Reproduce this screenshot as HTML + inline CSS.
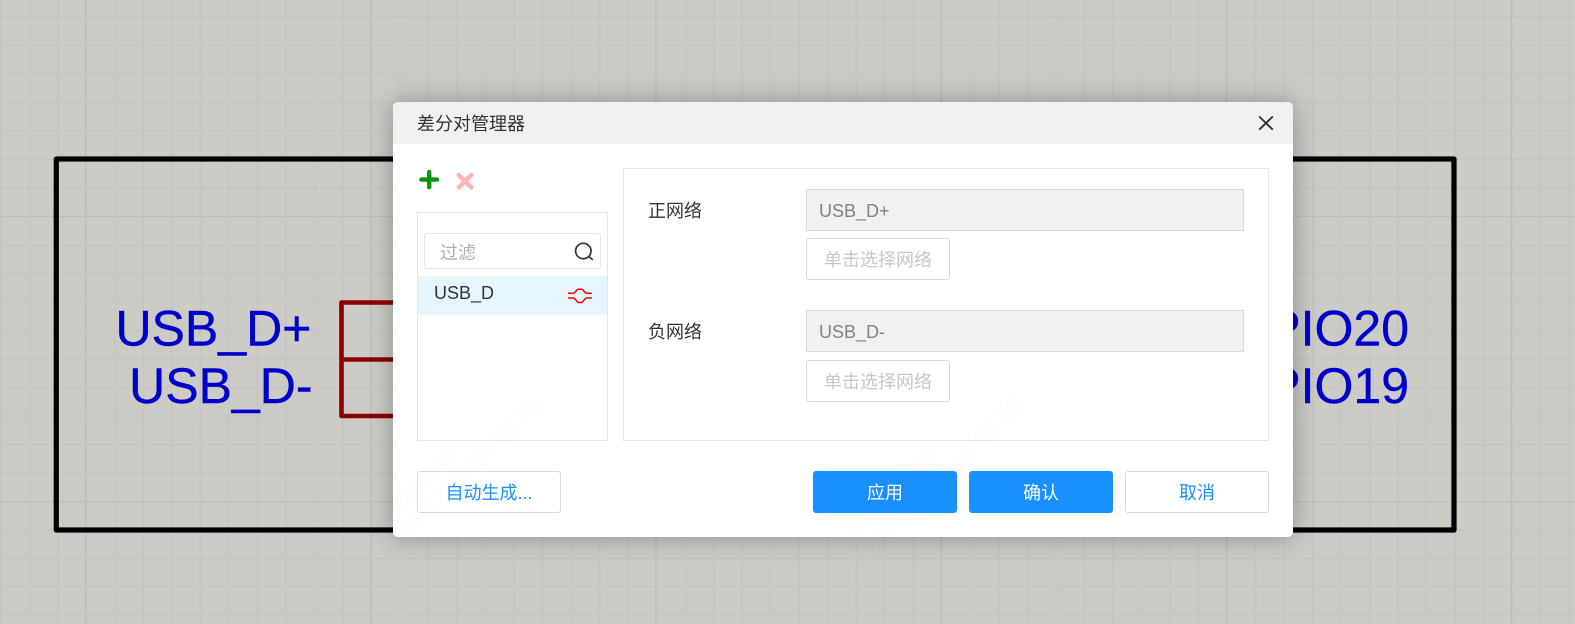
<!DOCTYPE html>
<html lang="zh-CN"><head><meta charset="utf-8"><title>差分对管理器</title>
<style>
html,body{margin:0;padding:0;width:1575px;height:624px;overflow:hidden;background:#cccbc6}
*{box-sizing:border-box}
body{font-family:"Liberation Sans","Noto Sans CJK SC",sans-serif;font-size:18px;color:#333;position:relative}
svg.bg,svg.wm{position:absolute;left:0;top:0}
svg.wm{pointer-events:none;z-index:5}
.abs{position:absolute}
.dlg{position:absolute;left:393px;top:102px;width:900px;height:435px;background:#fff;border-radius:5px;box-shadow:0 0 26px rgba(0,0,0,.32);overflow:hidden}
.head{position:absolute;left:0;top:0;width:900px;height:42px;background:#f0f0f0;line-height:44px;padding-left:24px;font-size:18px;color:#333}
.box{position:absolute;background:#fff;border:1px solid #e6e6e6}
.search{position:absolute;background:#fff;border:1px solid #e6e6e6;border-radius:3px;color:#b0b0b0;line-height:38px;padding-left:15px}
.row{position:absolute;background:#e6f6fe;color:#333;line-height:35px;padding-left:16px}
.lbl{position:absolute;line-height:24px;color:#333}
.inp{position:absolute;background:#f0f0f0;border:1px solid #d9d9d9;color:#828282;line-height:42px;padding-left:12px;width:438px;height:42px}
.btn{position:absolute;border-radius:3px;text-align:center;line-height:42px;height:42px;border:1px solid #d9d9d9;background:#fff;color:#1890ff;width:144px}
.btn.dis{color:#c4c8cc}
.btn.pri{background:#1890ff;border-color:#1890ff;color:#fff}
.foot{line-height:43px}
</style></head><body>
<svg class="bg" width="1575" height="624" viewBox="0 0 1575 624" xmlns="http://www.w3.org/2000/svg">
<defs>
<pattern id="mi" x="0" y="16" width="28.52" height="28.52" patternUnits="userSpaceOnUse">
<rect x="0" y="0" width="1.4" height="28.52" fill="#c6c5c0"/>
<rect x="0" y="0" width="28.52" height="1.4" fill="#c6c5c0"/>
</pattern>
<pattern id="ma" x="84.9" y="216" width="285.2" height="285.2" patternUnits="userSpaceOnUse">
<rect x="0" y="0" width="1" height="285.2" fill="#bdbcb7"/>
<rect x="0" y="0" width="285.2" height="1" fill="#bdbcb7"/>
</pattern>
</defs>
<rect width="1575" height="624" fill="#cccbc6"/>
<rect width="1575" height="624" fill="url(#mi)"/>
<rect width="1575" height="624" fill="url(#ma)"/>
<rect x="56.300" y="159" width="1397.700" height="371" fill="none" stroke="#000" stroke-width="5.200" stroke-linejoin="round"/>
<path d="M700 302.500H341.500V416H700M341.500 359.500H700" fill="none" stroke="#8b0000" stroke-width="4.600" stroke-linejoin="round"/>
<g font-family="Liberation Sans,sans-serif" font-size="50" fill="#0000cc" stroke="#0000cc" stroke-width=".4">
<text x="311.400" y="345.600" text-anchor="end">USB_D+</text>
<text x="312.500" y="403" text-anchor="end">USB_D-</text>
<text x="1409" y="345.600" text-anchor="end">PIO20</text>
<text x="1409" y="403" text-anchor="end">PIO19</text>
</g>
</svg>
<div class="dlg">
<div class="head">差分对管理器</div>
<svg class="abs" style="left:850px;top:0" width="50" height="42" viewBox="0 0 50 42"><path d="M16.200 14.500L29.800 27.700M29.800 14.500L16.200 27.700" stroke="#333" stroke-width="1.900" fill="none"/></svg>
<svg class="abs" style="left:24px;top:66px" width="60" height="24" viewBox="0 0 60 24"><path d="M12.200 4V19.200M4.500 11.600H20" stroke="#0a950a" stroke-width="4.400" stroke-linecap="round" fill="none"/><path d="M41.700 7L54.300 19.400M54.300 7L41.700 19.400" stroke="#ffb3b3" stroke-width="4.400" stroke-linecap="round" fill="none"/></svg>
<div class="box" style="left:24px;top:110px;width:191px;height:229px"></div>
<div class="search" style="left:31px;top:131px;width:177px;height:36px">过滤</div>
<svg class="abs" style="left:178px;top:137px" width="26" height="26" viewBox="0 0 26 26"><circle cx="12.300" cy="12" r="7.700" fill="none" stroke="#333" stroke-width="1.700"/><path d="M18 17.600L21.800 20.800" stroke="#333" stroke-width="1.700" fill="none"/></svg>
<div class="row" style="left:25px;top:174px;width:189px;height:39px">USB_D</div>
<svg class="abs" style="left:175px;top:185px" width="24" height="18" viewBox="0 0 24 18"><path d="M0 6.300H5Q6.500 6.300 8 4.200Q9 2.500 10.500 2.300H13.500Q15 2.500 16 4.200Q17.500 6.300 19 6.300H24M0 11H5Q6.500 11 8 13.100Q9 14.900 10.500 15.500H13.500Q15 14.900 16 13.100Q17.500 11 19 11H24" fill="none" stroke="#f00" stroke-width="1.500"/></svg>
<div class="box" style="left:230px;top:66px;width:646px;height:273px"></div>
<div class="lbl" style="left:255px;top:97px">正网络</div>
<div class="inp" style="left:413px;top:87px">USB_D+</div>
<div class="btn dis" style="left:413px;top:136px">单击选择网络</div>
<div class="lbl" style="left:255px;top:218px">负网络</div>
<div class="inp" style="left:413px;top:208px">USB_D-</div>
<div class="btn dis" style="left:413px;top:258px">单击选择网络</div>
<div class="btn foot" style="left:24px;top:369px">自动生成...</div>
<div class="btn pri foot" style="left:420px;top:369px">应用</div>
<div class="btn pri foot" style="left:576px;top:369px">确认</div>
<div class="btn foot" style="left:732px;top:369px">取消</div>
</div>
<svg class="wm" width="1575" height="624" viewBox="0 0 1575 624" xmlns="http://www.w3.org/2000/svg">
<g font-family="Liberation Sans,sans-serif" font-size="23" fill="rgba(128,128,128,.025)" text-anchor="end">
<text transform="translate(458 456) rotate(-45)">ZouYuXuan</text>
<text transform="translate(541 407) rotate(-45)">2025-12-01 10:03:36</text>
<text transform="translate(938 456) rotate(-45)">ZouYuXuan</text>
<text transform="translate(1023 407) rotate(-45)">2025-12-01 10:03:36</text>
</g>
</svg>
</body></html>
